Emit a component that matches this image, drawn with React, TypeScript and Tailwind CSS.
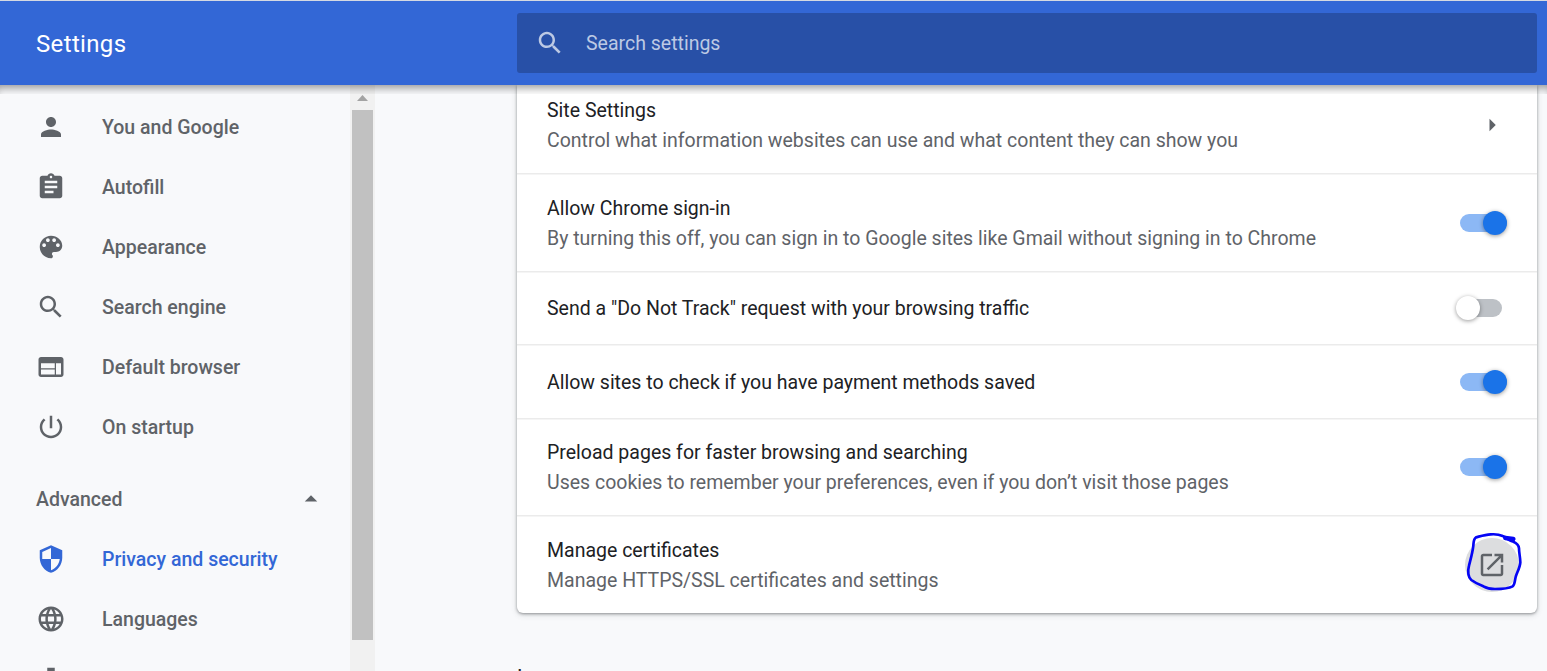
import type { ReactNode } from 'react';

const icons = {
  person: 'M12 12c2.21 0 4-1.79 4-4s-1.79-4-4-4-4 1.79-4 4 1.79 4 4 4zm0 2c-2.67 0-8 1.34-8 4v2h16v-2c0-2.66-5.33-4-8-4z',
  assignment:
    'M19 3h-4.18C14.4 1.84 13.3 1 12 1c-1.3 0-2.4.84-2.82 2H5c-1.1 0-2 .9-2 2v14c0 1.1.9 2 2 2h14c1.1 0 2-.9 2-2V5c0-1.1-.9-2-2-2zm-7 0c.55 0 1 .45 1 1s-.45 1-1 1-1-.45-1-1 .45-1 1-1zm2 14H7v-2h7v2zm3-4H7v-2h10v2zm0-4H7V7h10v2z',
  palette:
    'M12 3c-4.97 0-9 4.03-9 9s4.03 9 9 9c.83 0 1.5-.67 1.5-1.5 0-.39-.15-.74-.39-1.01-.23-.26-.38-.61-.38-.99 0-.83.67-1.5 1.5-1.5H16c2.76 0 5-2.24 5-5 0-4.42-4.03-8-9-8zm-5.5 9c-.83 0-1.5-.67-1.5-1.5S5.67 9 6.5 9 8 9.67 8 10.5 7.33 12 6.5 12zm3-4C8.67 8 8 7.33 8 6.5S8.67 5 9.5 5s1.5.67 1.5 1.5S10.33 8 9.5 8zm5 0c-.83 0-1.5-.67-1.5-1.5S13.67 5 14.5 5s1.5.67 1.5 1.5S15.33 8 14.5 8zm3 4c-.83 0-1.5-.67-1.5-1.5S16.67 9 17.5 9s1.5.67 1.5 1.5-.67 1.5-1.5 1.5z',
  search:
    'M15.5 14h-.79l-.28-.27C15.41 12.59 16 11.11 16 9.5 16 5.91 13.09 3 9.5 3S3 5.91 3 9.5 5.91 16 9.5 16c1.61 0 3.09-.59 4.23-1.57l.27.28v.79l5 4.99L20.49 19l-4.99-5zm-6 0C7.01 14 5 11.99 5 9.5S7.01 5 9.5 5 14 7.01 14 9.5 11.99 14 9.5 14z',
  web: 'M20 4H4c-1.1 0-1.99.9-1.99 2L2 18c0 1.1.9 2 2 2h16c1.1 0 2-.9 2-2V6c0-1.1-.9-2-2-2zm-5 14H4v-4h11v4zm0-5H4V9h11v4zm5 5h-4V9h4v9z',
  power:
    'M13 3h-2v10h2V3zm4.83 2.17l-1.42 1.42C17.99 7.86 19 9.81 19 12c0 3.87-3.13 7-7 7s-7-3.13-7-7c0-2.19 1.01-4.14 2.58-5.42L6.17 5.17C4.23 6.82 3 9.26 3 12c0 4.97 4.03 9 9 9s9-4.03 9-9c0-2.74-1.23-5.18-3.17-6.83z',
  shield:
    'M12 1L3 5v6c0 5.55 3.84 10.74 9 12 5.16-1.26 9-6.45 9-12V5l-9-4zm0 10.99h7c-.53 4.12-3.28 7.79-7 8.94V12H5V6.3l7-3.11v8.8z',
  globe:
    'M11.99 2C6.47 2 2 6.48 2 12s4.47 10 9.99 10C17.52 22 22 17.52 22 12S17.52 2 11.99 2zm6.93 6h-2.95c-.32-1.25-.78-2.45-1.38-3.56 1.84.63 3.37 1.91 4.33 3.56zM12 4.04c.83 1.2 1.48 2.53 1.91 3.96h-3.82c.43-1.43 1.08-2.76 1.91-3.96zM4.26 14C4.1 13.36 4 12.69 4 12s.1-1.36.26-2h3.38c-.08.66-.14 1.32-.14 2s.06 1.34.14 2H4.26zm.82 2h2.95c.32 1.25.78 2.45 1.38 3.56-1.84-.63-3.37-1.9-4.33-3.56zm2.95-8H5.08c.96-1.66 2.49-2.93 4.33-3.56C8.81 5.55 8.35 6.75 8.03 8zM12 19.96c-.83-1.2-1.48-2.53-1.91-3.96h3.82c-.43 1.43-1.08 2.76-1.91 3.96zM14.34 14H9.66c-.09-.66-.16-1.32-.16-2s.07-1.35.16-2h4.68c.09.65.16 1.32.16 2s-.07 1.34-.16 2zm.25 5.56c.6-1.11 1.06-2.31 1.38-3.56h2.95c-.96 1.65-2.49 2.93-4.33 3.56zM16.36 14c.08-.66.14-1.32.14-2s-.06-1.34-.14-2h3.38c.16.64.26 1.31.26 2s-.1 1.36-.26 2h-3.38z',
  download: 'M19 9h-4V3H9v6H5l7 7 7-7zM5 18v2h14v-2H5z',
  openInNew: 'M19 19H5V5h7V3H5c-1.11 0-2 .9-2 2v14c0 1.1.89 2 2 2h14c1.1 0 2-.9 2-2v-7h-2v7zM14 3v2h3.59l-9.83 9.83 1.41 1.41L19 6.41V10h2V3h-7z',
  dropUp: 'M7 14l5-5 5 5z',
  right: 'M10 17l5-5-5-5z',
};

function Icon({ name, className = '' }: { name: keyof typeof icons; className?: string }) {
  return (
    <svg viewBox="0 0 24 24" fill="currentColor" className={`size-[30px] shrink-0 ${className}`}>
      <path d={icons[name]} />
    </svg>
  );
}

function MenuItem({ icon, label, active }: { icon: keyof typeof icons; label?: string; active?: boolean }) {
  return (
    <a className={`flex h-[60px] shrink-0 items-center gap-9 pl-9 ${active ? 'text-[#3367d6]' : 'text-[#5f6368]'}`}>
      <Icon name={icon} />
      {label && <span className="pt-0.5">{label}</span>}
    </a>
  );
}

function Toggle({ on }: { on?: boolean }) {
  return on ? (
    <div className="mr-[30px] flex h-[18px] w-[47px] items-center justify-end rounded-full bg-[#8cb8f5]">
      <div className="size-6 rounded-full bg-[#1a73e8] shadow-[0_1px_4px_rgba(0,0,0,0.4)]" />
    </div>
  ) : (
    <div className="mr-[35px] flex h-[18px] w-[42px] items-center rounded-full bg-[#bdc1c6]">
      <div className="-ml-1 size-6 rounded-full bg-white shadow-[0_1px_4px_rgba(0,0,0,0.4)]" />
    </div>
  );
}

function Row({ title, sub, height, first, children }: { title: string; sub?: string; height: string; first?: boolean; children: ReactNode }) {
  return (
    <div
      className={`flex shrink-0 items-center justify-between pl-[30px] ${height} ${first ? '' : 'shadow-[inset_0_1px_#ebebeb,inset_0_2px_#f5f5f5]'}`}
    >
      <div className="pt-0.5 leading-[30px]">
        <div className="text-[#202124]">{title}</div>
        {sub && <div className="text-[#5f6368]">{sub}</div>}
      </div>
      {children}
    </div>
  );
}

export default function App() {
  return (
    <div className="flex h-[671px] w-[1547px] flex-col overflow-hidden bg-[#f8f9fb] font-['Roboto',sans-serif] text-[19.5px]">
      <header className="relative z-10 flex h-[85px] shrink-0 items-start border-t border-[#d5d9e2] bg-[#3367d6]">
        <h1 className="w-[517px] pl-9 text-2xl leading-[86px] tracking-[0.35px] text-white">Settings</h1>
        <div className="mt-3 flex h-[60px] w-[1020px] items-center rounded-[3px] bg-[#2850a7] pl-[18px] text-[#bcc9e4]">
          <Icon name="search" />
          <span className="ml-[21px] pt-0.5">Search settings</span>
        </div>
        <div className="absolute top-full left-0 h-[9px] w-full shadow-[inset_0_7.5px_9px_-4.5px_rgba(0,0,0,0.4)]" />
      </header>
      <div className="flex min-h-0 flex-1">
        <nav className="flex w-[350px] flex-col overflow-hidden pt-3 font-medium">
          <MenuItem icon="person" label="You and Google" />
          <MenuItem icon="assignment" label="Autofill" />
          <MenuItem icon="palette" label="Appearance" />
          <MenuItem icon="search" label="Search engine" />
          <MenuItem icon="web" label="Default browser" />
          <MenuItem icon="power" label="On startup" />
          <div className="mt-3 flex h-[60px] shrink-0 items-center justify-between pr-6 pl-9 text-[#5f6368]">
            <span className="pt-0.5">Advanced</span>
            <Icon name="dropUp" />
          </div>
          <MenuItem icon="shield" label="Privacy and security" active />
          <MenuItem icon="globe" label="Languages" />
          <MenuItem icon="download" />
        </nav>
        <div className="flex w-[25px] flex-col items-center bg-[#f1f1f1]">
          <div className="flex h-[25px] items-center">
            <svg viewBox="0 0 11 6" className="h-1.5 w-[11px] fill-[#a3a3a3]">
              <path d="M0 6L5.5 0L11 6z" />
            </svg>
          </div>
          <div className="h-[530px] w-[21px] bg-[#c1c1c1]" />
        </div>
        <main className="flex flex-col overflow-hidden pr-2.5 pl-[142px]">
          <section className="flex w-[1020px] shrink-0 flex-col rounded-b-md bg-white shadow-[0_1px_3px_rgba(60,64,67,0.5),0_2px_6px_rgba(60,64,67,0.15)]">
            <Row first title="Site Settings" sub="Control what information websites can use and what content they can show you" height="h-[88px] pb-2">
              <Icon name="right" className="mr-[30px] text-[#5f6368]" />
            </Row>
            <Row title="Allow Chrome sign-in" sub="By turning this off, you can sign in to Google sites like Gmail without signing in to Chrome" height="h-[98px] pt-0.5">
              <Toggle on />
            </Row>
            <Row title={'Send a "Do Not Track" request with your browsing traffic'} height="h-[73px] pt-px">
              <Toggle />
            </Row>
            <Row title="Allow sites to check if you have payment methods saved" height="h-[74px] pt-0.5">
              <Toggle on />
            </Row>
            <Row title="Preload pages for faster browsing and searching" sub="Uses cookies to remember your preferences, even if you don’t visit those pages" height="h-[97px] pt-px">
              <Toggle on />
            </Row>
            <Row title="Manage certificates" sub="Manage HTTPS/SSL certificates and settings" height="h-[98px] pt-0.5">
              <div className="relative mr-[18px] flex size-[54px] items-center justify-center rounded-full bg-[#dcdddf] text-[#5f6368]">
                <Icon name="openInNew" />
                <svg viewBox="0 0 210 225" className="absolute -top-[13px] -left-[5px] h-[75px] w-[70px]" fill="none" stroke="#0505f5" strokeWidth="8" strokeLinecap="round" strokeLinejoin="round">
                  <path d="M162 42C150 46 140 38 128 33C115 27 105 27 92 28C75 29 60 34 48 37C40 42 41 52 40 62C38 82 32 102 27 122C22 140 25 158 34 165C45 173 57 179 70 184C82 191 92 192 105 192C125 192 145 191 158 184C165 178 164 168 167 156C170 144 180 128 181 112C181 98 177 84 177 70C176 58 170 54 160 50C150 48 142 42 132 36" />
                  <path d="M136 39L160 42" strokeWidth="13" />
                </svg>
              </div>
            </Row>
          </section>
          <h2 className="mt-[49px] shrink-0 text-[21px] leading-[30px] text-[#202124]">Languages</h2>
        </main>
      </div>
    </div>
  );
}
